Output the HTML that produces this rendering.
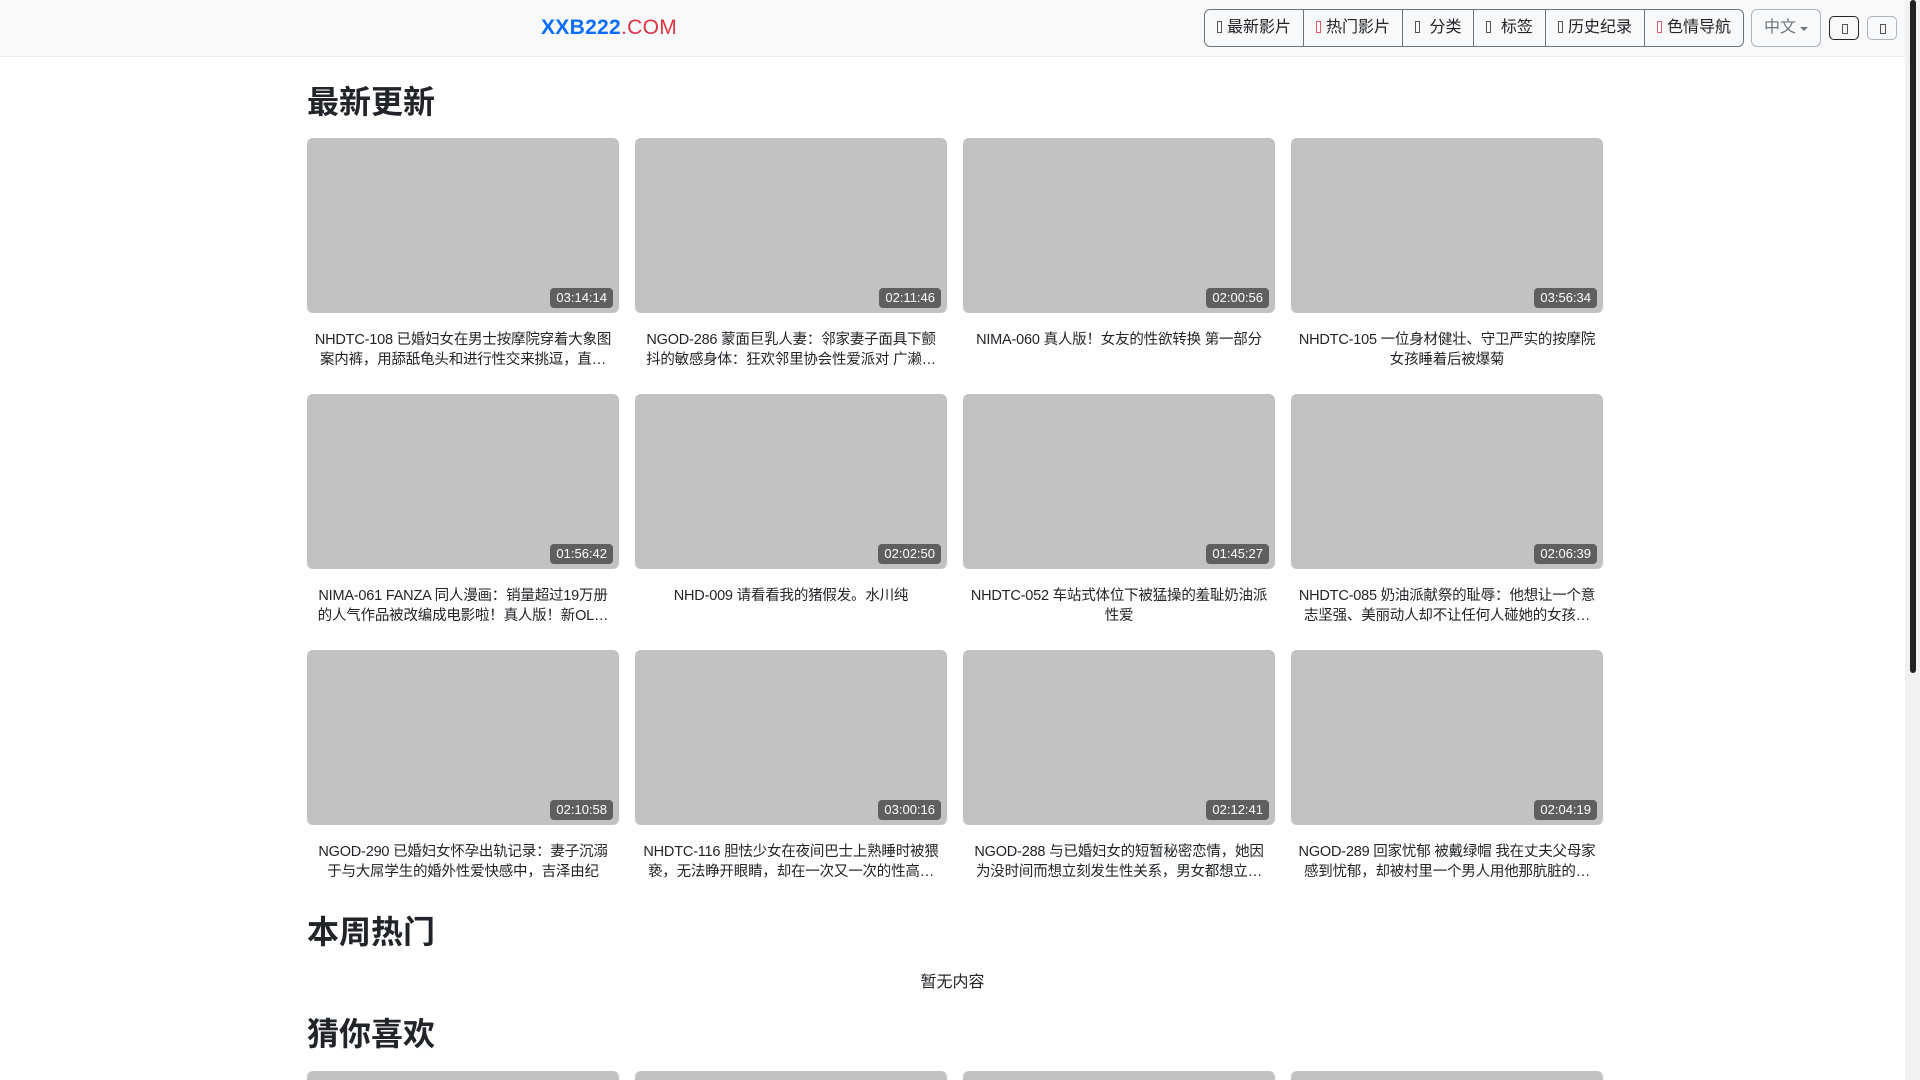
<!DOCTYPE html>
<html><head><meta charset="utf-8"><style>
*{box-sizing:border-box;margin:0;padding:0}
html,body{width:1920px;height:1080px;overflow:hidden;background:#fff;font-family:"Liberation Sans","Noto Sans CJK SC",sans-serif;color:#212529}
#wrap{position:relative;width:1920px;height:1080px;overflow:hidden}
.nav{position:absolute;left:0;top:0;width:1905px;height:57px;background:#f8f9fa;border-bottom:1px solid #e9ecef}
.logo{position:absolute;left:541px;top:16px;font-size:21px;font-weight:bold;color:#0d6efd;letter-spacing:.3px}
.logo span{color:#dc3545;font-weight:normal}
.grp{position:absolute;left:1204px;top:9px;height:38px;display:flex;border:1px solid #6c757d;border-radius:6px;overflow:hidden}
.grp div{height:36px;line-height:36px;padding:0 12px;font-size:16px;border-left:1px solid #6c757d;color:#212529;white-space:nowrap}
.grp div:first-child{border-left:none}
.ic{display:inline-block;width:5px;height:12px;border:1px solid #555;margin-right:5px;vertical-align:-1px}
.ic.r{border-color:#e35d6a}
.lang{position:absolute;left:1751px;top:9px;width:70px;height:38px;border:1px solid #adb5bd;border-radius:6px;font-size:16px;color:#6c757d;line-height:36px;padding-left:12px}
.lang:after{content:"";position:absolute;right:12px;top:17px;border:4px solid transparent;border-top-color:#6c757d;border-bottom:none}
.sb{position:absolute;top:16px;width:30px;height:24px;border:1px solid #212529;border-radius:5px}
.sb:after{content:"";position:absolute;left:12px;top:7px;width:4px;height:8px;border:1px solid #555}
.scroll{position:absolute;left:1905px;top:0;width:15px;height:1080px;background:#f1f1f1}
.scroll div{position:absolute;left:5px;top:0;width:6px;height:673px;background:#222;border-radius:3px}
h2{position:absolute;left:307px;font-size:32px;font-weight:bold;line-height:40px;color:#212529}
.card{position:absolute;width:312px}
.th{height:175px;background:#c2c2c2;border-radius:6px;position:relative}
.du{position:absolute;right:6px;bottom:5px;background:#5f5f5f;color:#fff;font-size:13px;line-height:20px;padding:0 6px;border-radius:4px}
.t{margin-top:17px;text-align:center;font-size:14.5px;line-height:20px;padding:0 6px;letter-spacing:-0.2px;display:-webkit-box;-webkit-line-clamp:2;-webkit-box-orient:vertical;overflow:hidden}
.empty{position:absolute;left:0;width:1905px;text-align:center;top:968px;font-size:16px}
.bt{position:absolute;top:1071px;width:312px;height:9px;background:#c2c2c2;border-radius:6px 6px 0 0}
</style></head><body><div id="wrap">
<div class="nav">
<div class="logo">XXB222<span>.COM</span></div>
<div class="grp"><div><i class="ic"></i>最新影片</div><div><i class="ic r"></i>热门影片</div><div><i class="ic"></i> 分类</div><div><i class="ic"></i> 标签</div><div><i class="ic"></i>历史纪录</div><div><i class="ic r"></i>色情导航</div></div>
<div class="lang">中文</div>
<div class="sb" style="left:1829px"></div>
<div class="sb" style="left:1867px;border-color:#adb5bd"></div>
</div>
<h2 style="top:82px">最新更新</h2>
<h2 style="top:912px">本周热门</h2>
<div class="empty">暂无内容</div>
<h2 style="top:1014px">猜你喜欢</h2>

<div class="card" style="left:307px;top:138px"><div class="th"><span class="du">03:14:14</span></div><div class="t">NHDTC-108 已婚妇女在男士按摩院穿着大象图案内裤，用舔舐龟头和进行性交来挑逗，直到射精为止</div></div>
<div class="card" style="left:635px;top:138px"><div class="th"><span class="du">02:11:46</span></div><div class="t">NGOD-286 蒙面巨乳人妻：邻家妻子面具下颤抖的敏感身体：狂欢邻里协会性爱派对 广濑美优</div></div>
<div class="card" style="left:963px;top:138px"><div class="th"><span class="du">02:00:56</span></div><div class="t">NIMA-060 真人版！女友的性欲转换 第一部分</div></div>
<div class="card" style="left:1291px;top:138px"><div class="th"><span class="du">03:56:34</span></div><div class="t">NHDTC-105 一位身材健壮、守卫严实的按摩院女孩睡着后被爆菊</div></div>

<div class="card" style="left:307px;top:394px"><div class="th"><span class="du">01:56:42</span></div><div class="t">NIMA-061 FANZA 同人漫画：销量超过19万册的人气作品被改编成电影啦！真人版！新OL的性骚扰</div></div>
<div class="card" style="left:635px;top:394px"><div class="th"><span class="du">02:02:50</span></div><div class="t">NHD-009 请看看我的猪假发。水川纯</div></div>
<div class="card" style="left:963px;top:394px"><div class="th"><span class="du">01:45:27</span></div><div class="t">NHDTC-052 车站式体位下被猛操的羞耻奶油派性爱</div></div>
<div class="card" style="left:1291px;top:394px"><div class="th"><span class="du">02:06:39</span></div><div class="t">NHDTC-085 奶油派献祭的耻辱：他想让一个意志坚强、美丽动人却不让任何人碰她的女孩怀孕</div></div>

<div class="card" style="left:307px;top:650px"><div class="th"><span class="du">02:10:58</span></div><div class="t">NGOD-290 已婚妇女怀孕出轨记录：妻子沉溺于与大屌学生的婚外性爱快感中，吉泽由纪</div></div>
<div class="card" style="left:635px;top:650px"><div class="th"><span class="du">03:00:16</span></div><div class="t">NHDTC-116 胆怯少女在夜间巴士上熟睡时被猥亵，无法睁开眼睛，却在一次又一次的性高潮中</div></div>
<div class="card" style="left:963px;top:650px"><div class="th"><span class="du">02:12:41</span></div><div class="t">NGOD-288 与已婚妇女的短暂秘密恋情，她因为没时间而想立刻发生性关系，男女都想立刻做爱</div></div>
<div class="card" style="left:1291px;top:650px"><div class="th"><span class="du">02:04:19</span></div><div class="t">NGOD-289 回家忧郁 被戴绿帽 我在丈夫父母家感到忧郁，却被村里一个男人用他那肮脏的大肉棒</div></div>

<div class="bt" style="left:307px"></div>
<div class="bt" style="left:635px"></div>
<div class="bt" style="left:963px"></div>
<div class="bt" style="left:1291px"></div>
<div class="scroll"><div></div></div>
</div></body></html>
